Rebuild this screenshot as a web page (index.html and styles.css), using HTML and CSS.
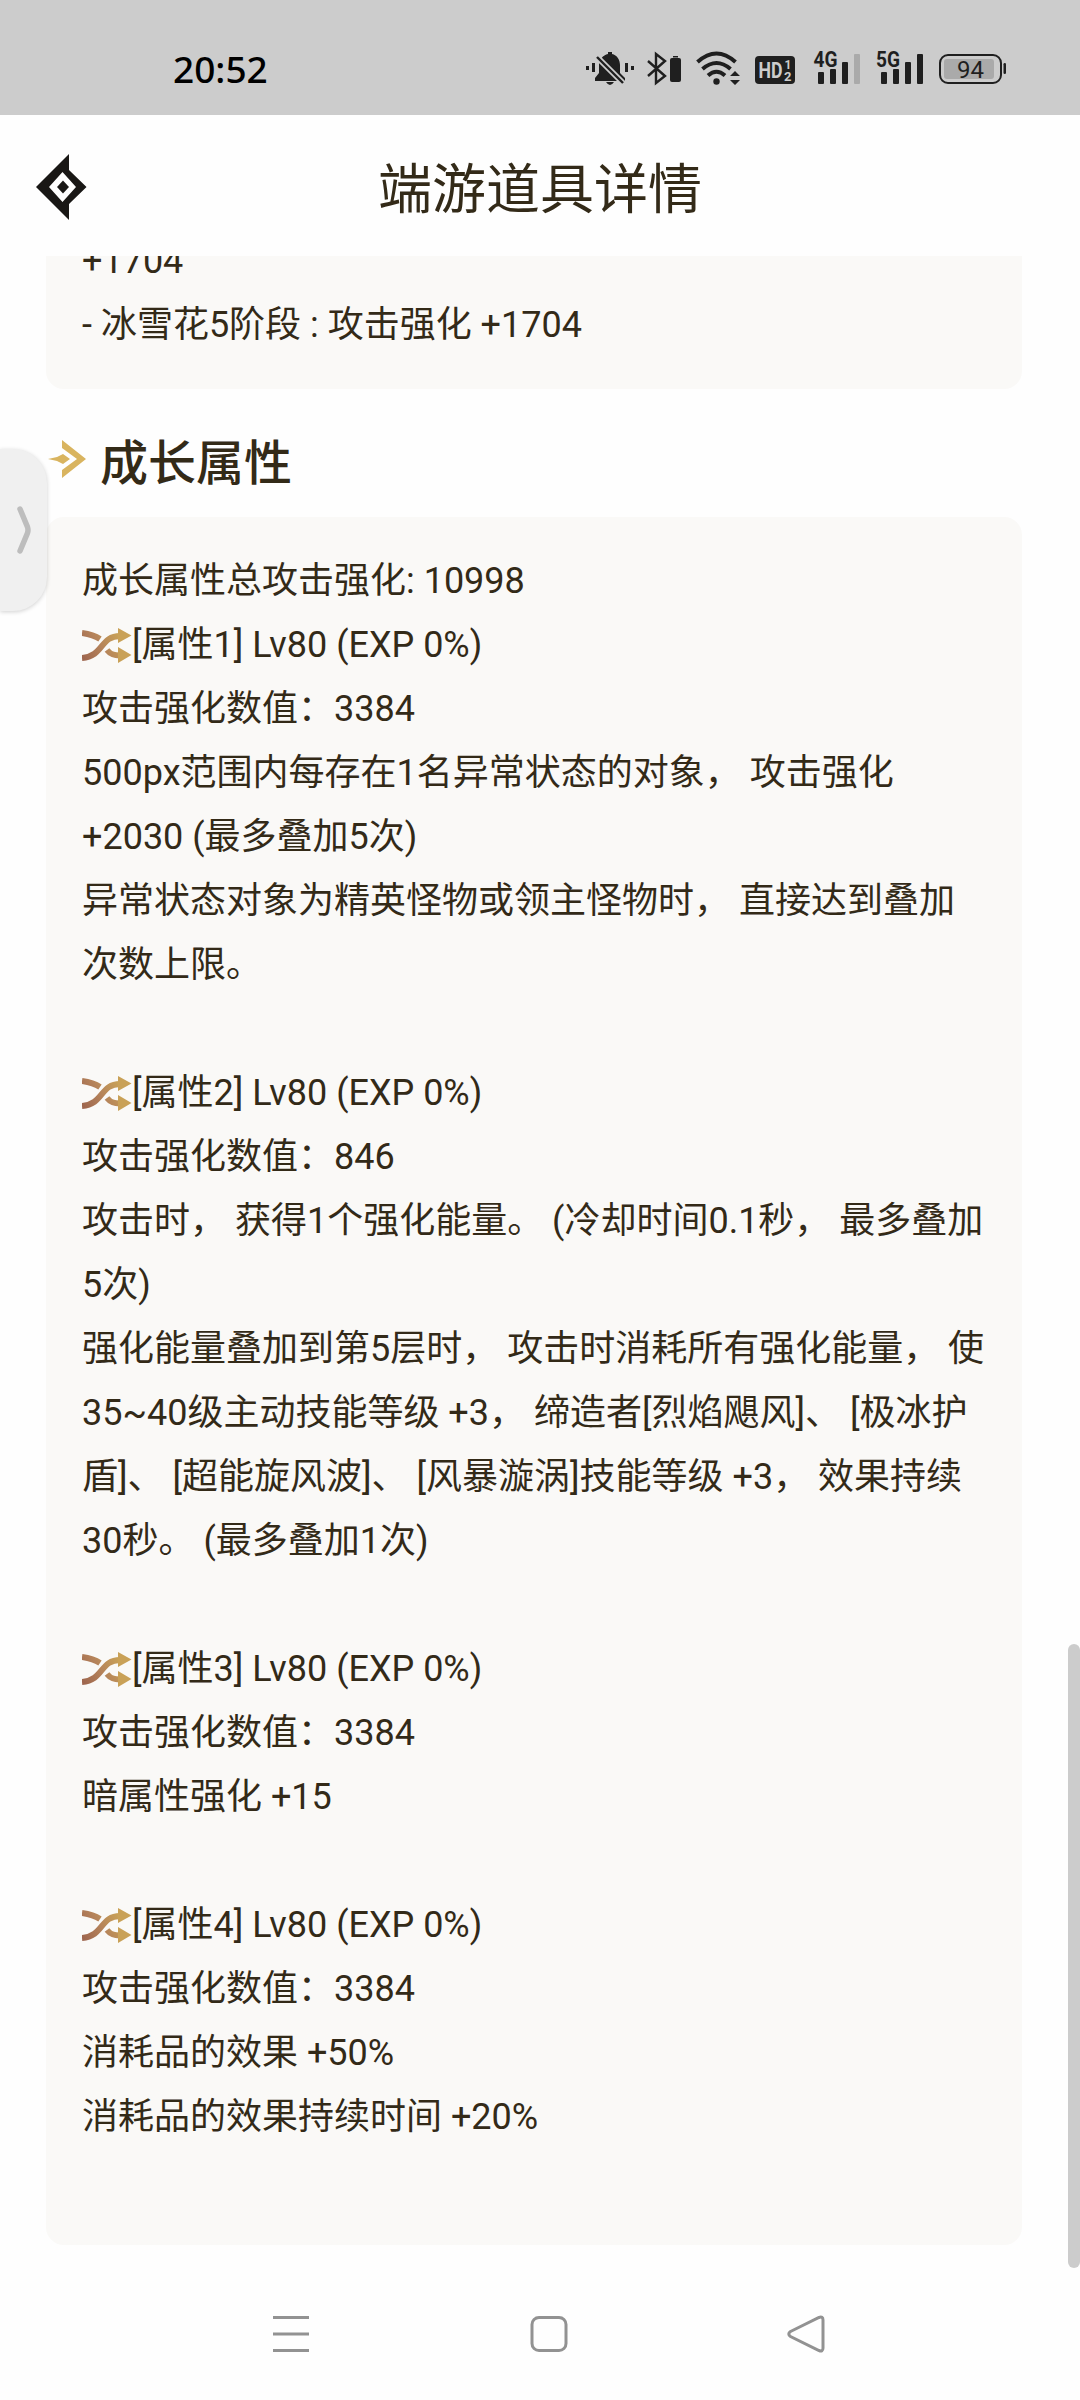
FILE: index.html
```html
<!DOCTYPE html>
<html lang="zh-CN">
<head>
<meta charset="utf-8">
<title>端游道具详情</title>
<link rel="stylesheet" href="styles.css">
</head>
<body>
<svg class="defs" width="0" height="0" aria-hidden="true">
  <defs>
    <linearGradient id="gold" gradientUnits="userSpaceOnUse" x1="0" y1="36" x2="48" y2="6">
      <stop offset="0" stop-color="#9a614c"/><stop offset=".45" stop-color="#b5835a"/><stop offset=".8" stop-color="#c79f57"/>
    </linearGradient>
    <symbol id="shuffle" viewBox="0 0 50 36">
      <path d="M0 5C7 6 12 7 18 11M0 30C22 28 18 8 38 8M25 22C29 27 33 27.500 38 27.500" fill="none" stroke="url(#gold)" stroke-width="6"/>
      <path d="M36 0L49.500 7.500L36 15ZM36 19L49.500 27L36 35Z" fill="#c9a157"/>
    </symbol>
  </defs>
</svg>
<div class="phone">
  <header class="status">
    <span class="clock">20:52</span>
    <svg class="status-icons" viewBox="0 0 460 80" width="460" height="80">
      <g fill="#1f1f1f">
        <path d="M16 36h3v4h-3zM22 33h3v9h-3zM55 33h3v9h-3zM61 36h3v4h-3z"/>
        <path d="M25 51v-3l4-5V35c0-5 4-10 9-11v-2h4v2c5 1 8 6 8 11v8l5 5v3zM36 52h8q-4 6-8 0z"/>
        <path d="M27 27L53 53" stroke="#ccc" stroke-width="6"/><path d="M27 27L53 53" stroke="#1f1f1f" stroke-width="2.400"/>
        <path d="M78 31L95 46L86 53V24L95 31L78 46" fill="none" stroke="#1f1f1f" stroke-width="2.400"/>
        <rect x="100" y="28" width="11" height="24" rx="2"/><rect x="103" y="26" width="5" height="1.500"/>
        <g fill="none" stroke="#1f1f1f" stroke-width="4"><path d="M127.500 32Q146.500 15 165.500 32M132.500 39Q146.500 27 160.500 39M138 45.500Q146.500 38 155 45.500"/></g>
        <circle cx="146.500" cy="51.500" r="3.200"/><path d="M160 46l5-5 5 5zM160 50h10l-5 5z"/>
        <rect x="185" y="26" width="40" height="28" rx="4"/>
        <rect x="248" y="42" width="6" height="12" rx="1"/><rect x="260" y="39" width="6" height="15" rx="1"/><rect x="272" y="32" width="6" height="22" rx="1"/><rect x="284" y="24" width="6" height="30" rx="1" fill="#aaa"/>
        <rect x="311" y="42" width="6" height="12" rx="1"/><rect x="323" y="39" width="6" height="15" rx="1"/><rect x="335" y="32" width="6" height="22" rx="1"/><rect x="347" y="24" width="6" height="30" rx="1"/>
        <rect x="370" y="25" width="61" height="28" rx="8" fill="none" stroke="#1f1f1f" stroke-width="2"/>
        <rect x="374" y="29" width="50" height="20" rx="3" fill="#aaa"/><rect x="433.500" y="33" width="2.500" height="11" rx="1.200"/>
      </g>
      <g class="status-text">
        <text x="188.500" y="48" font-size="22" font-weight="700" fill="#ccc" textLength="24" lengthAdjust="spacingAndGlyphs">HD</text>
        <text x="214.500" y="39" font-size="12" font-weight="700" fill="#ccc">1</text>
        <text x="214" y="50.500" font-size="13" font-weight="700" fill="#ccc">2</text>
        <text x="243.500" y="37" font-size="21.500" font-weight="700" fill="#1f1f1f" textLength="24" lengthAdjust="spacingAndGlyphs">4G</text>
        <text x="306" y="37" font-size="21.500" font-weight="700" fill="#1f1f1f" textLength="24" lengthAdjust="spacingAndGlyphs">5G</text>
        <text x="400.500" y="47.500" font-size="24" text-anchor="middle" fill="#1f1f1f">94</text>
      </g>
    </svg>
  </header>

  <nav class="titlebar">
    <svg class="back" viewBox="0 0 50 66" width="50" height="66">
      <path fill="#191715" fill-rule="evenodd" d="M33 0V16L50.500 33L33 50V66L0 33ZM26.500 18L13 33L26.500 48L40 33Z"/>
      <path fill="#191715" d="M27 26.500L33 33L27 39.500L21 33Z"/>
    </svg>
    <h1 class="title">端游道具详情</h1>
  </nav>

  <main class="content">
    <section class="card card-top">
      <p>+1704</p>
      <p>- 冰雪花5阶段 : 攻击强化 +1704</p>
    </section>

    <h2 class="section-title">
      <svg viewBox="0 0 38 38" width="38" height="38"><path fill="#d9b45f" d="M14 0L38 19L14 38V30L29 19L14 8Z"/><path fill="#d9b45f" d="M0 19L9 17L15 14L22 19L15 24L9 21Z"/></svg>
      <span>成长属性</span>
    </h2>

    <section class="card card-main">
      <p>成长属性总攻击强化: 10998</p>
      <p><svg class="shuffle"><use href="#shuffle"/></svg>[属性1] Lv80 (EXP 0%)</p>
      <p>攻击强化数值：3384</p>
      <p>500px范围内每存在1名异常状态的对象， 攻击强化</p>
      <p>+2030 (最多叠加5次)</p>
      <p>异常状态对象为精英怪物或领主怪物时， 直接达到叠加</p>
      <p>次数上限。</p>
      <p></p>
      <p><svg class="shuffle"><use href="#shuffle"/></svg>[属性2] Lv80 (EXP 0%)</p>
      <p>攻击强化数值：846</p>
      <p>攻击时， 获得1个强化能量。 (冷却时间0.1秒， 最多叠加</p>
      <p>5次)</p>
      <p>强化能量叠加到第5层时， 攻击时消耗所有强化能量， 使</p>
      <p>35~40级主动技能等级 +3， 缔造者[烈焰飓风]、 [极冰护</p>
      <p>盾]、 [超能旋风波]、 [风暴漩涡]技能等级 +3， 效果持续</p>
      <p>30秒。 (最多叠加1次)</p>
      <p></p>
      <p><svg class="shuffle"><use href="#shuffle"/></svg>[属性3] Lv80 (EXP 0%)</p>
      <p>攻击强化数值：3384</p>
      <p>暗属性强化 +15</p>
      <p></p>
      <p><svg class="shuffle"><use href="#shuffle"/></svg>[属性4] Lv80 (EXP 0%)</p>
      <p>攻击强化数值：3384</p>
      <p>消耗品的效果 +50%</p>
      <p>消耗品的效果持续时间 +20%</p>
      <p></p>
    </section>
  </main>

  <footer class="navbar">
    <svg viewBox="0 0 40 40"><path d="M2 3.500H38M2 20H38M2 36.500H38"/></svg>
    <svg viewBox="0 0 40 40"><rect x="3" y="3.500" width="34" height="33" rx="7"/></svg>
    <svg viewBox="0 0 40 40"><path d="M3.500 17.500L32 3.500Q36 2 36 6V34Q36 38 32 36.500L3.500 22.500Q0 20 3.500 17.500Z"/></svg>
  </footer>

  <div class="side-tab"><svg viewBox="0 0 14 48" width="14" height="48"><path d="M3 3L10.500 21Q11.500 24 10.500 27L3 45"/></svg></div>
  <div class="scrollbar"></div>
</div>
</body>
</html>
```
FILE: styles.css
```css
* { box-sizing: border-box; margin: 0; padding: 0; }
body { background: #fefefe; }
.defs { display: block; position: absolute; }
.phone {
  position: relative;
  width: 1080px;
  height: 2400px;
  overflow: hidden;
  display: flex;
  flex-direction: column;
  font-family: Roboto, "Noto Sans CJK SC", sans-serif;
  color: #332a18;
}
.status {
  height: 115px;
  flex: none;
  display: flex;
  align-items: flex-start;
  justify-content: space-between;
  padding: 30px 50px 0 173px;
  background: #ccc;
}
.clock {
  font: 500 37px/78px "Noto Sans", sans-serif;
  color: #000;
}
.status-icons { display: block; }
.status-text { font-family: Roboto, sans-serif; }

.titlebar {
  height: 141px;
  flex: none;
  display: grid;
  grid-template-columns: 50px 1fr 50px;
  align-items: start;
  padding: 39px 36px 0;
}
.back { display: block; overflow: visible; }
.title {
  text-align: center;
  font-size: 54px;
  font-weight: 400;
  line-height: 72px;
  padding-top: 1px;
}

.content {
  flex: 1;
  min-height: 0;
  overflow: hidden;
  padding: 0 58px 0 46px;
}
.card {
  background: #faf9f7;
  padding: 0 36px;
  font-size: 36px;
  font-weight: 400;
}
.card p {
  height: 64px;
  line-height: 64px;
  white-space: nowrap;
}
.card-top {
  height: 133px;
  border-radius: 0 0 18px 18px;
  display: flex;
  flex-direction: column;
  justify-content: flex-end;
  padding-bottom: 32px;
  overflow: hidden;
}
.card-top p { flex: none; }
.section-title {
  height: 128px;
  display: flex;
  align-items: center;
  gap: 14px;
  padding: 12px 2px 0;
  font-size: 48px;
  font-weight: 500;
}
.card-main {
  height: 1728px;
  border-radius: 18px;
  padding-top: 32px;
}
.shuffle { width: 50px; height: 36px; vertical-align: -7px; }

.navbar {
  height: 132px;
  flex: none;
  display: flex;
  justify-content: space-between;
  padding: 46px 253px 0 271px;
}
.navbar svg {
  width: 40px;
  height: 40px;
  fill: none;
  stroke: #929292;
  stroke-width: 3;
}
.side-tab {
  position: absolute;
  left: 0;
  top: 449px;
  width: 47px;
  height: 162px;
  display: flex;
  align-items: center;
  padding-left: 17px;
  border-radius: 0 34px 34px 0;
  background: #f0f0f0;
  box-shadow: 0 1px 4px rgba(0, 0, 0, .18);
}
.side-tab path {
  fill: none;
  stroke: #bdbdbd;
  stroke-width: 5.5;
  stroke-linecap: round;
}
.scrollbar {
  position: absolute;
  left: 1068px;
  top: 1644px;
  width: 12px;
  height: 624px;
  border-radius: 6px;
  background: #ccc;
}
```
